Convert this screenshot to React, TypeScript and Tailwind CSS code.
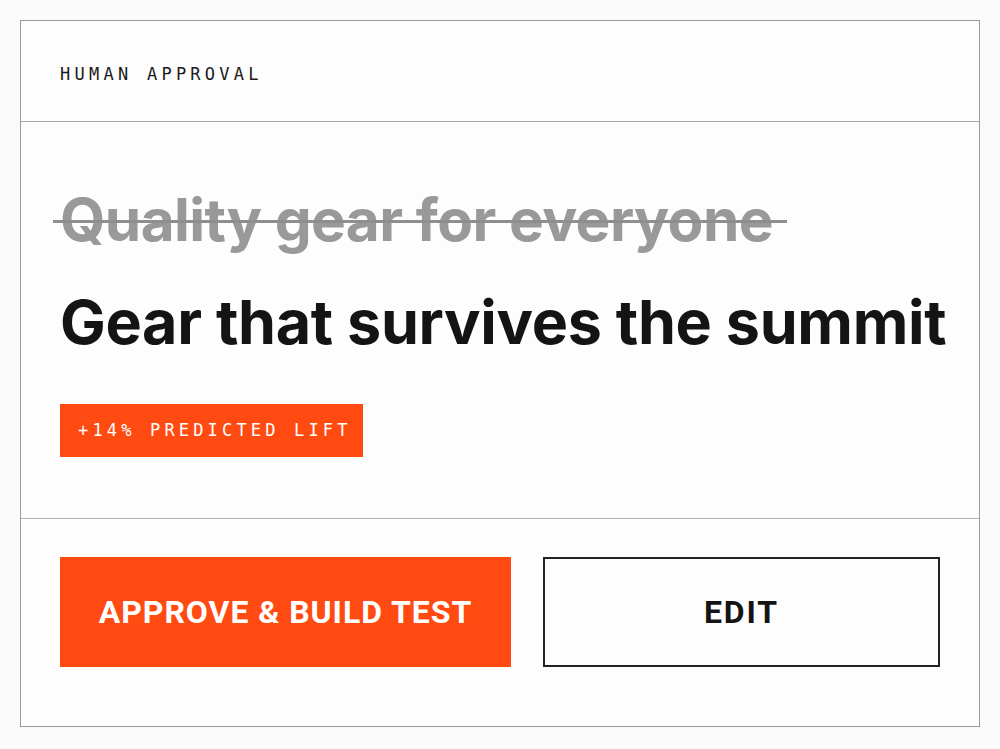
export default function App() {
  return (
    <div className="w-[1000px] h-[749px] bg-[#fafafa] p-5">
      <div className="w-[960px] h-[707px] border border-[#9a9a9a] bg-[#fdfdfd] flex flex-col">
        {/* Header */}
        <div className="h-[101px] border-b border-[#a8a8a8] flex items-center px-[39px]">
          <span className="font-['DejaVu_Sans_Mono',monospace] text-[17px] tracking-[0.25em] text-[#1a1a1a] pt-[8px]">
            HUMAN APPROVAL
          </span>
        </div>

        {/* Copy change */}
        <div className="h-[397px] border-b border-[#b4b4b4] px-[39px] pt-[60px] flex flex-col items-start font-['Inter',sans-serif]">
          <div className="relative whitespace-nowrap">
            <span className="text-[58.5px] font-bold leading-[76px] tracking-[-0.01em] text-[#999999]">
              Quality gear for everyone
            </span>
            <span className="absolute left-[-7px] right-[-14px] top-[38px] h-[3px] bg-[#8e8e8e]" />
          </div>
          <div className="mt-[26px] whitespace-nowrap text-[61px] font-bold leading-[76px] tracking-[-0.005em] text-[#141414]">
            Gear that survives the summit
          </div>
          <div className="mt-[44px] shrink-0 h-[53px] pl-[18px] pr-[11px] flex items-center bg-[#ff4a12] text-white font-['DejaVu_Sans_Mono',monospace] text-[17px] tracking-[0.245em] whitespace-nowrap">
            +14% PREDICTED LIFT
          </div>
        </div>

        {/* Actions */}
        <div className="flex-1 px-[39px] pt-[38px] flex gap-8 font-['Roboto',sans-serif]">
          <button className="w-[451px] h-[110px] bg-[#ff4a12] text-white text-[32px] font-bold tracking-[0.03em]">
            APPROVE &amp; BUILD TEST
          </button>
          <button className="flex-1 h-[110px] border-2 border-[#222] text-[#141414] text-[32px] font-bold tracking-[0.06em]">
            EDIT
          </button>
        </div>
      </div>
    </div>
  );
}
